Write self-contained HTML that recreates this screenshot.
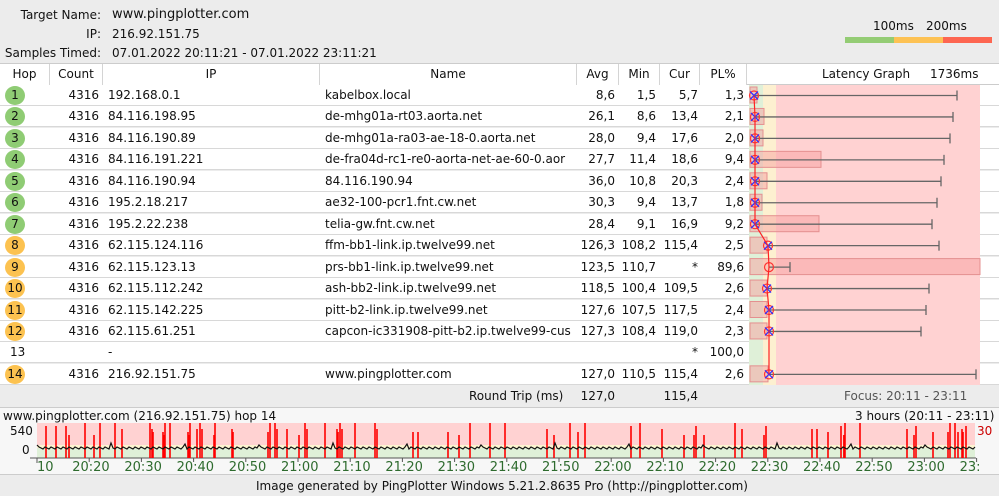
<!DOCTYPE html><html><head><meta charset="utf-8"><style>
*{margin:0;padding:0;box-sizing:border-box}
body{width:999px;height:496px;background:#ececec;font-family:"DejaVu Sans","Liberation Sans",sans-serif;font-size:12px;color:#111;position:relative;overflow:hidden}
.a{position:absolute;white-space:nowrap}
.r{text-align:right}
.row{position:absolute;left:0;width:999px;height:21px;background:#fff;border-bottom:1px solid #d8d8d8}
.row span{position:absolute;top:3px;white-space:nowrap}
.c{position:absolute;left:5px;top:1px;width:20px;height:19px;border-radius:50%;text-align:center;line-height:19px;font-size:12px}
.g{background:#8fcc74}.o{background:#fcc250}
.hd{position:absolute;top:64px;height:21px;background:#fff;border-right:1px solid #d4d4d4;text-align:center;line-height:20px}
</style></head><body>
<div class="a r" style="left:0;width:101px;top:8px">Target Name:</div>
<div class="a" style="left:112px;top:7px;font-size:13px">www.pingplotter.com</div>
<div class="a r" style="left:0;width:101px;top:27px">IP:</div>
<div class="a" style="left:112px;top:27px">216.92.151.75</div>
<div class="a r" style="left:0;width:101px;top:46px">Samples Timed:</div>
<div class="a" style="left:112px;top:46px">07.01.2022 20:11:21 - 07.01.2022 23:11:21</div>
<div class="a" style="left:873px;top:19px">100ms</div>
<div class="a" style="left:926px;top:19px">200ms</div>
<div class="a" style="left:845px;top:37px;width:49px;height:6px;background:#94cc74"></div>
<div class="a" style="left:894px;top:37px;width:49px;height:6px;background:#fdc254"></div>
<div class="a" style="left:943px;top:37px;width:49px;height:6px;background:#fd6651"></div>

<div class="a" style="left:0;top:63px;width:999px;height:22px;background:#fff;border-top:1px solid #ccc;border-bottom:1px solid #ccc"></div>
<div class="hd" style="left:0;width:50px">Hop</div>
<div class="hd" style="left:50px;width:53px">Count</div>
<div class="hd" style="left:103px;width:217px">IP</div>
<div class="hd" style="left:320px;width:257px">Name</div>
<div class="hd" style="left:577px;width:42px">Avg</div>
<div class="hd" style="left:619px;width:41px">Min</div>
<div class="hd" style="left:660px;width:40px">Cur</div>
<div class="hd" style="left:700px;width:47px">PL%</div>
<div class="a" style="left:822px;top:67px">Latency Graph</div>
<div class="a" style="left:930px;top:67px">1736ms</div>

<div id="rows"></div>
<div class="a" style="left:0;top:385px;width:999px;height:21px;background:#ececec"></div>
<div class="a" style="left:469px;top:389px">Round Trip (ms)</div>
<div class="a r" style="left:577px;width:38px;top:389px">127,0</div>
<div class="a r" style="left:660px;width:38px;top:389px">115,4</div>
<div class="a" style="left:844px;top:389px;color:#555">Focus: 20:11 - 23:11</div>
<div class="a" style="left:0;top:407px;width:999px;height:68px;background:#f7f7f7;border-top:1px solid #ccc;border-bottom:1px solid #ccc"></div>
<div class="a" style="left:3px;top:409px">www.pingplotter.com (216.92.151.75) hop 14</div>
<div class="a" style="left:855px;top:409px">3 hours (20:11 - 23:11)</div>
<div class="a" style="left:10px;top:424px">540</div>
<div class="a" style="left:22px;top:443px">0</div>
<div class="a" style="left:977px;top:424px;color:#c00">30</div>
<svg class="a" style="left:0;top:0" width="999" height="496" id="sv"></svg>
<div class="a" style="left:256px;top:479px">Image generated by PingPlotter Windows 5.21.2.8635 Pro (http://pingplotter.com)</div>
<script>
var d=[
[1,'g','192.168.0.1','kabelbox.local','8,6','1,5','5,7','1,3',754,957,757],
[2,'g','84.116.198.95','de-mhg01a-rt03.aorta.net','26,1','8,6','13,4','2,1',755,953,764],
[3,'g','84.116.190.89','de-mhg01a-ra03-ae-18-0.aorta.net','28,0','9,4','17,6','2,0',755,950,763],
[4,'g','84.116.191.221','de-fra04d-rc1-re0-aorta-net-ae-60-0.aor','27,7','11,4','18,6','9,4',755,944,821],
[5,'g','84.116.190.94','84.116.190.94','36,0','10,8','20,3','2,4',755,941,767],
[6,'g','195.2.18.217','ae32-100-pcr1.fnt.cw.net','30,3','9,4','13,7','1,8',755,937,762],
[7,'g','195.2.22.238','telia-gw.fnt.cw.net','28,4','9,1','16,9','9,2',755,932,819],
[8,'o','62.115.124.116','ffm-bb1-link.ip.twelve99.net','126,3','108,2','115,4','2,5',768,939,767],
[9,'o','62.115.123.13','prs-bb1-link.ip.twelve99.net','123,5','110,7','*','89,6',769,790,980],
[10,'o','62.115.112.242','ash-bb2-link.ip.twelve99.net','118,5','100,4','109,5','2,6',767,929,767],
[11,'o','62.115.142.225','pitt-b2-link.ip.twelve99.net','127,6','107,5','117,5','2,4',769,926,767],
[12,'o','62.115.61.251','capcon-ic331908-pitt-b2.ip.twelve99-cus','127,3','108,4','119,0','2,3',769,921,767],
[13,'','-','','','','*','100,0',0,0,0],
[14,'o','216.92.151.75','www.pingplotter.com','127,0','110,5','115,4','2,6',769,976,768]];
var h='',s='';
s+='<rect x="749" y="85" width="14" height="300" fill="#dff0d8"/><rect x="763" y="85" width="13" height="300" fill="#fdf0d0"/><rect x="776" y="85" width="204" height="300" fill="#ffd2d2"/>';
var pts=[];
d.forEach(function(r,i){var y=85+i*21.45;
h+='<div class="row" style="top:'+y+'px">'+(r[1]?'<div class="c '+r[1]+'">'+r[0]+'</div>':'<span style="left:10px">'+r[0]+'</span>')+
'<span style="left:50px;width:49px;text-align:right">'+(r[1]?'4316':'')+'</span><span style="left:108px">'+r[2]+'</span><span style="left:325px">'+r[3]+'</span>'+
'<span style="left:577px;width:38px;text-align:right">'+r[4]+'</span><span style="left:619px;width:37px;text-align:right">'+r[5]+'</span><span style="left:660px;width:38px;text-align:right">'+r[6]+'</span><span style="left:700px;width:44px;text-align:right">'+r[7]+'</span></div>';
var cy=y+10.5;
if(r[8]){s+='<rect x="750" y="'+(y+2)+'" width="'+(r[10]-750)+'" height="16" fill="#f7a0a0" fill-opacity=".5" stroke="#e49090"/>';
s+='<line x1="'+r[8]+'" y1="'+cy+'" x2="'+r[9]+'" y2="'+cy+'" stroke="#666" stroke-width="1.3"/><line x1="'+r[9]+'" y1="'+(cy-5)+'" x2="'+r[9]+'" y2="'+(cy+5)+'" stroke="#666" stroke-width="1.3"/>';
s+='<circle cx="'+r[8]+'" cy="'+cy+'" r="4.5" fill="none" stroke="#f33" stroke-width="1.2"/>';
if(r[0]!=9)s+='<path d="M'+(r[8]-4)+' '+(cy-4)+'l8 8M'+(r[8]+4)+' '+(cy-4)+'l-8 8" stroke="#33f" stroke-width="1.3"/>';
pts.push(r[8]+','+cy);}
});
s='<g>'+s+'<polyline points="'+pts.join(' ')+'" fill="none" stroke="#f22" stroke-width="1.2"/></g>';
document.getElementById('rows').innerHTML=h;
var b='<rect x="37" y="423" width="938" height="22" fill="#ffd2d2"/><rect x="37" y="445" width="938" height="3" fill="#fdf4d0"/><rect x="37" y="448" width="938" height="10" fill="#dff0d8"/>';
b+='<line x1="30" y1="458" x2="976" y2="458" stroke="#555"/><line x1="37" y1="458" x2="37" y2="463" stroke="#555"/>';
var sp=[46,56,66,69,85,94,100,115,122,150,152,153,163,164,165,170,188,189,190,197,200,202,214,215,232,233,268,270,275,277,287,299,305,307,325,338,340,337,342,355,375,377,413,418,448,459,470,490,505,547,554,570,578,585,631,640,662,684,694,696,704,735,742,764,766,812,817,828,841,844,845,844,860,907,914,916,933,948,950,955,958,962,963,966];
sp.forEach(function(x){b+='<line x1="'+x+'" y1="'+(423+(x%5)*3)+'" x2="'+x+'" y2="458" stroke="#f00" stroke-width="1.6"/>';});
var p='';for(var x=37;x<=975;x+=2){p+=x+','+(448+((x*7919)%3)-1+(x%37==0?-4:0))+' ';}
b+='<polyline points="'+p+'" fill="none" stroke="#111" stroke-width="1.2"/>';
var lab=['10','20:20','20:30','20:40','20:50','21:00','21:10','21:20','21:30','21:40','21:50','22:00','22:10','22:20','22:30','22:40','22:50','23:00','23:'];
lab.forEach(function(t,i){var x=i==0?37:37+i*52.2-17;b+='<text x="'+x+'" y="471" font-size="13" fill="#2e6b2e" font-family="DejaVu Sans, sans-serif">'+t+'</text>';
if(i)b+='<line x1="'+(37+i*52.2)+'" y1="458" x2="'+(37+i*52.2)+'" y2="462" stroke="#555"/>';});
document.getElementById('sv').innerHTML=s+b;
</script>
</body></html>
